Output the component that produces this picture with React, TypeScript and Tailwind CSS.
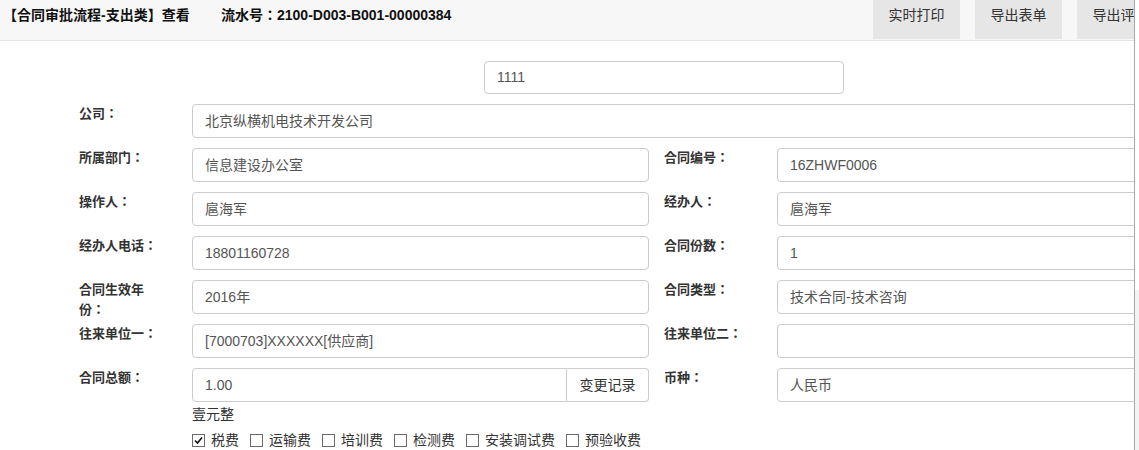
const font = { fontFamily: '"Liberation Sans", Arial, "Noto Sans CJK SC", sans-serif' }
const cjk = { fontFamily: '"Liberation Sans", Arial, "Noto Sans CJK JP", sans-serif' }

function Field({ label, value, width = 457 }: { label: string; value: string; width?: number }) {
    return (
        <div className="flex h-[34px]">
            <div className="w-[113px] shrink-0 pr-[28px] text-[13px] leading-[20px] font-bold text-[#333]" style={cjk}>
                {label}
            </div>
            <div
                className="h-[34px] shrink-0 rounded-[4px] border border-[#ccc] bg-white px-[12px] py-[6px] text-[14px] leading-[20px] text-[#555]"
                style={{ width }}
            >
                {value}
            </div>
        </div>
    )
}

function Row({ left, right }: { left: [string, string]; right: [string, string] }) {
    return (
        <div className="flex gap-[15px]">
            <Field label={left[0]} value={left[1]} />
            <Field label={right[0]} value={right[1]} width={420} />
        </div>
    )
}

function Check({ on, label }: { on?: boolean; label: string }) {
    return (
        <div className="flex items-center gap-[6px]">
            <span className="flex h-[13px] w-[13px] items-center justify-center border border-[#6b6b6b] bg-white">
                {on && (
                    <svg width="9" height="9" viewBox="0 0 9 9">
                        <path d="M1 4.5 L3.5 7 L8 1.5" fill="none" stroke="#111" strokeWidth="1.6" />
                    </svg>
                )}
            </span>
            <span className="text-[14px] leading-[20px] text-[#333]">{label}</span>
        </div>
    )
}

export default function App() {
    return (
        <div className="flex h-[450px] w-[1139px] overflow-hidden bg-white" style={font}>
            <div className="w-[1134px] shrink-0 overflow-hidden">
                <div className="flex h-[41px] items-start border-b border-[#e3e3e3] bg-[#f7f7f7]">
                    <div className="flex w-[873px] shrink-0 pl-[3px] pt-[5px] text-[14px] leading-[20px] font-bold text-[#111]" style={cjk}>
                        <span className="w-[218px]">【合同审批流程-支出类】查看</span>
                        <span>流水号：2100-D003-B001-00000384</span>
                    </div>
                    <div className="flex shrink-0 gap-[15px]">
                        <div className="h-[39px] w-[87px] bg-[#e6e6e6] pt-[5px] text-center text-[14px] leading-[20px] text-[#333]">实时打印</div>
                        <div className="h-[39px] w-[87px] bg-[#e6e6e6] pt-[5px] text-center text-[14px] leading-[20px] text-[#333]">导出表单</div>
                        <div className="h-[39px] w-[87px] bg-[#e6e6e6] pt-[5px] text-center text-[14px] leading-[20px] text-[#333]">导出评审</div>
                    </div>
                </div>
                <div className="flex flex-col gap-[10px] pl-[79px] pt-[20px]">
                    <div className="ml-[405px] h-[33px] w-[360px] rounded-[4px] border border-[#ccc] px-[12px] py-[5px] text-[14px] leading-[20px] text-[#555]">
                        1111
                    </div>
                    <Field label="公司：" value="北京纵横机电技术开发公司" width={1000} />
                    <Row left={['所属部门：', '信息建设办公室']} right={['合同编号：', '16ZHWF0006']} />
                    <Row left={['操作人：', '扈海军']} right={['经办人：', '扈海军']} />
                    <Row left={['经办人电话：', '18801160728']} right={['合同份数：', '1']} />
                    <Row left={['合同生效年份：', '2016年']} right={['合同类型：', '技术合同-技术咨询']} />
                    <Row left={['往来单位一：', '[7000703]XXXXXX[供应商]']} right={['往来单位二：', '']} />
                    <div className="flex h-[34px] gap-[15px]">
                        <div className="flex">
                            <div className="w-[113px] shrink-0 text-[13px] leading-[20px] font-bold text-[#333]" style={cjk}>合同总额：</div>
                            <div className="flex w-[457px]">
                                <div className="h-[34px] flex-1 rounded-l-[4px] border border-[#ccc] px-[12px] py-[6px] text-[14px] leading-[20px] text-[#555]">
                                    1.00
                                </div>
                                <div className="h-[34px] w-[82px] rounded-r-[4px] border border-l-0 border-[#ccc] bg-white py-[6px] text-center text-[14px] leading-[20px] text-[#333]">
                                    变更记录
                                </div>
                            </div>
                        </div>
                        <Field label="币种：" value="人民币" width={420} />
                    </div>
                </div>
                <div className="pl-[192px]">
                    <div className="pt-[2px] text-[14px] leading-[20px] text-[#333]">壹元整</div>
                    <div className="mt-[6px] flex gap-[11px]">
                        <Check on label="税费" />
                        <Check label="运输费" />
                        <Check label="培训费" />
                        <Check label="检测费" />
                        <Check label="安装调试费" />
                        <Check label="预验收费" />
                    </div>
                </div>
            </div>
            <div className="flex w-[5px] shrink-0 flex-col border-l border-[#a8a8a8] bg-[#f3f3f3]">
                <div className="h-[290px] bg-white" />
            </div>
        </div>
    )
}
